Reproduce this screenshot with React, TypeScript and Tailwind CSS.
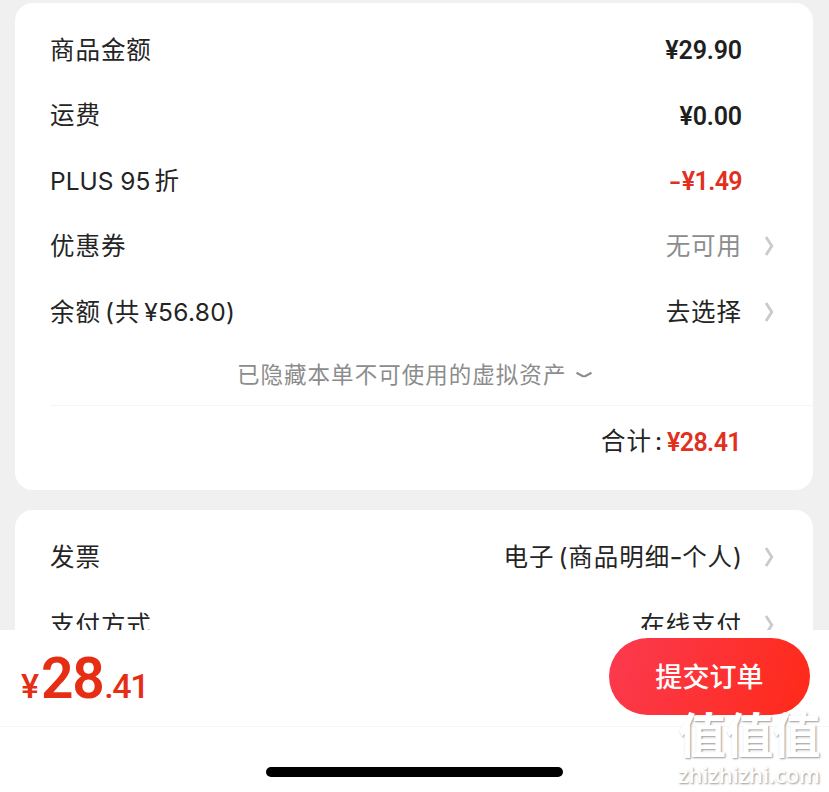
import type { ReactNode } from "react";
import clsx from "clsx";

function ChevronRight() {
  return (
    <svg width="12" height="20" viewBox="0 0 12 20" fill="none" className="shrink-0">
      <path d="M2 1 L7.8 10 L2 19" stroke="#cacaca" strokeWidth="2.8" />
    </svg>
  );
}

function ChevronDown() {
  return (
    <svg width="18" height="8" viewBox="0 0 18 8" fill="none" className="shrink-0">
      <path d="M1.5 1.8 L7.5 4.9 Q9 5.6 10.5 4.9 L16.5 1.8" stroke="#8c8c8c" strokeWidth="2.2" />
    </svg>
  );
}

interface RowProps {
  label: ReactNode;
  children: ReactNode;
  arrow?: boolean;
  tall?: boolean;
}

function Row({ label, children, arrow, tall }: RowProps) {
  return (
    <div className={clsx("flex items-center pl-[35px] pr-[37px]", tall ? "h-[68px]" : "h-[65.5px]")}>
      <span className="flex-1">{label}</span>
      {children}
      <span className="flex w-[34px] justify-end">{arrow && <ChevronRight />}</span>
    </div>
  );
}

function Price({ value, red, tight }: { value: string; red?: boolean; tight?: boolean }) {
  return (
    <span
      className={clsx(
        "pt-[2px] font-['Roboto',sans-serif] text-[25px] font-semibold",
        tight ? "tracking-[-0.6px]" : "tracking-[-0.15px]",
        red ? "text-[#e1301e]" : "text-[#1f1f1f]",
      )}
    >
      {value}
    </span>
  );
}

function Watermark() {
  return (
    <div className="pointer-events-none absolute top-[706px] left-[678px] flex w-[150px] flex-col text-white">
      <span className="h-[56px] text-[48px] leading-[60px] font-bold tracking-[-0.8px] whitespace-nowrap [text-shadow:1px_1px_2px_#999999]">
        值值值
      </span>
      <span className="h-[24px] font-['Open_Sans',sans-serif] text-[22px] leading-[24px] font-semibold tracking-[-0.1px] [text-shadow:1px_1px_2px_#999999]">
        zhizhizhi.com
      </span>
    </div>
  );
}

export default function App() {
  return (
    <div className="relative flex h-[792px] w-[829px] flex-col overflow-hidden bg-[#f0f0f0] font-['Inter','Noto_Sans_CJK_SC',sans-serif] text-[24.5px] leading-none tracking-[0.95px] text-[#242424]">
      <main className="flex h-[630px] flex-col gap-[20px] overflow-hidden pt-[3px] pr-[16px] pl-[15px]">
        <section className="h-[487px] shrink-0 rounded-[18px] bg-white pt-[14px]">
          <Row label="商品金额">
            <Price value="¥29.90" />
          </Row>
          <Row label="运费">
            <Price value="¥0.00" />
          </Row>
          <Row
            label={
              <>
                <span className="tracking-[0px]">PLUS 95</span>
                <span className="ml-[4px]">折</span>
              </>
            }
          >
            <span className="mr-[2px] flex w-[10px] scale-x-[1.15] justify-center font-semibold tracking-normal text-[#e1301e]">
              -
            </span>
            <Price value="¥1.49" red tight />
          </Row>
          <Row label="优惠券" arrow>
            <span className="text-[#8c8c8c]">无可用</span>
          </Row>
          <Row
            label={
              <>
                余额<span className="ml-[4px]">(</span>共
                <span className="ml-[4px] tracking-[0.3px]">¥56.80)</span>
              </>
            }
            arrow
          >
            <span>去选择</span>
          </Row>
          <div className="ml-[35px] flex h-[61px] items-center border-b border-[#f5f5f5] pt-px pl-[187px] text-[22.5px] tracking-[1.03px] text-[#8c8c8c]">
            已隐藏本单不可使用的虚拟资产
            <span className="ml-[9px]">
              <ChevronDown />
            </span>
          </div>
          <div className="flex h-[72px] items-center justify-end pr-[72px]">
            <span>合计</span>
            <span className="mr-[4px] ml-[3px]">:</span>
            <Price value="¥28.41" red tight />
          </div>
        </section>

        <section className="h-[200px] shrink-0 rounded-[18px] bg-white pt-[13px]">
          <Row label="发票" arrow tall>
            <span>电子</span>
            <span className="ml-[4px]">(</span>
            <span>商品明细</span>
            <span className="flex w-[12px] scale-x-[1.15] justify-center font-medium tracking-normal">-</span>
            <span>个人</span>
            <span className="tracking-normal">)</span>
          </Row>
          <Row label="支付方式" arrow tall>
            <span>在线支付</span>
          </Row>
        </section>
      </main>

      <footer className="h-[162px] bg-white">
        <div className="flex h-[97px] items-start justify-between border-b border-[#f5f5f5] pr-[19px] pl-[21px]">
          <div className="flex items-baseline pt-[20px] font-['Roboto',sans-serif] text-[#e62e14]">
            <span className="mr-[2px] text-[34px] font-medium tracking-normal">¥</span>
            <span className="text-[57px] font-semibold tracking-[-1.5px]">28</span>
            <span className="ml-px text-[34px] font-medium tracking-[-1.4px]">.41</span>
          </div>
          <button className="mt-[8px] h-[77px] w-[201px] rounded-full bg-linear-[110deg] from-[#fb3a50] to-[#ff2a18] pt-[2px] text-[27px] font-medium tracking-[0.1px] text-white">
            提交订单
          </button>
        </div>
        <div className="mx-auto mt-[40px] h-[10px] w-[297px] rounded-full bg-black" />
      </footer>

      <Watermark />
    </div>
  );
}
